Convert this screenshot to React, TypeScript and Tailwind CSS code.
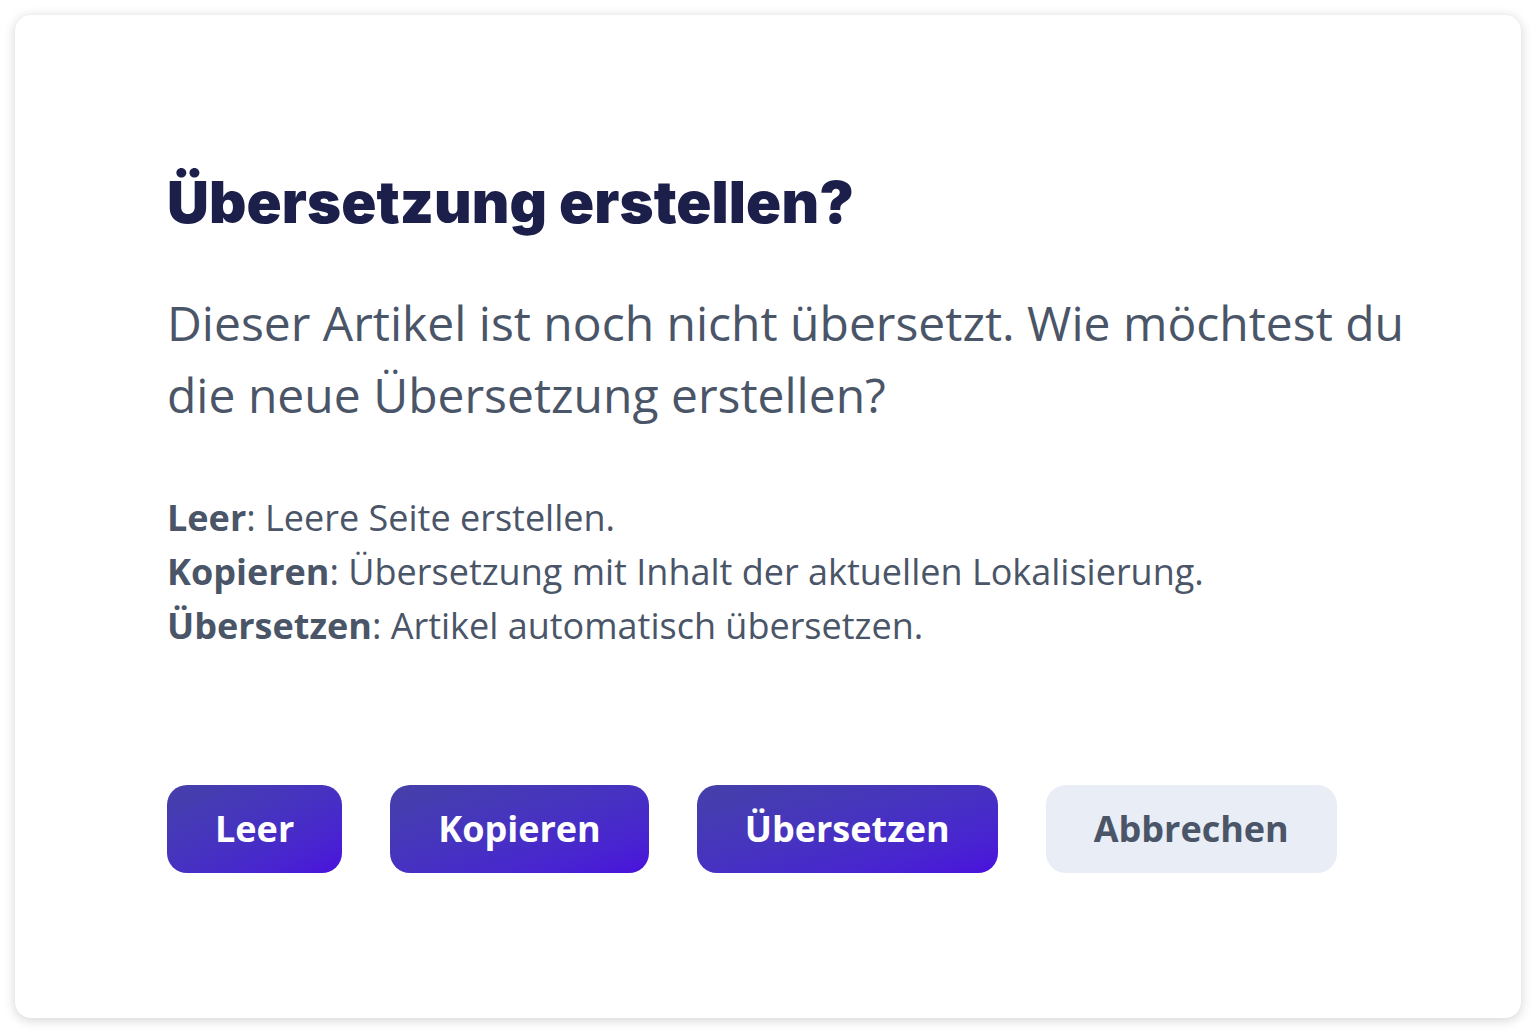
import React from 'react';

const buttons = ['Leer', 'Kopieren', 'Übersetzen'];

export default function App() {
  return (
    <div className="w-[1536px] h-[1033px] bg-white p-[15px]">
      <div className="h-[1003px] rounded-[16px] bg-white shadow-[0_2px_12px_rgba(0,0,0,0.18)] pl-[152px] pr-[100px] pt-[152px] font-['Open_Sans',sans-serif]">
        <h1 className="font-['Inter',sans-serif] font-black text-[58px] leading-[70px] tracking-[0.1px] text-[#1c1f4a]">
          Übersetzung erstellen?
        </h1>

        <p className="mt-[50px] text-[48px] leading-[72px] text-[#4a5568]">
          Dieser Artikel ist noch nicht übersetzt. Wie möchtest du die neue Übersetzung erstellen?
        </p>

        <div className="mt-[60px] text-[36px] leading-[54px] text-[#4a5568]">
          <p><span className="font-bold">Leer</span>: Leere Seite erstellen.</p>
          <p><span className="font-bold">Kopieren</span>: Übersetzung mit Inhalt der aktuellen Lokalisierung.</p>
          <p><span className="font-bold">Übersetzen</span>: Artikel automatisch übersetzen.</p>
        </div>

        <div className="mt-[132px] flex gap-[48px]">
          {buttons.map(label => (
            <button
              key={label}
              className="h-[88px] px-[48px] rounded-[20px] bg-gradient-to-br from-[#4540a8] to-[#4a0fdc] text-white text-[36px] font-bold"
            >
              {label}
            </button>
          ))}
          <button className="h-[88px] px-[48px] rounded-[20px] bg-[#e9edf6] text-[#4a5568] text-[36px] font-bold">
            Abbrechen
          </button>
        </div>
      </div>
    </div>
  );
}
